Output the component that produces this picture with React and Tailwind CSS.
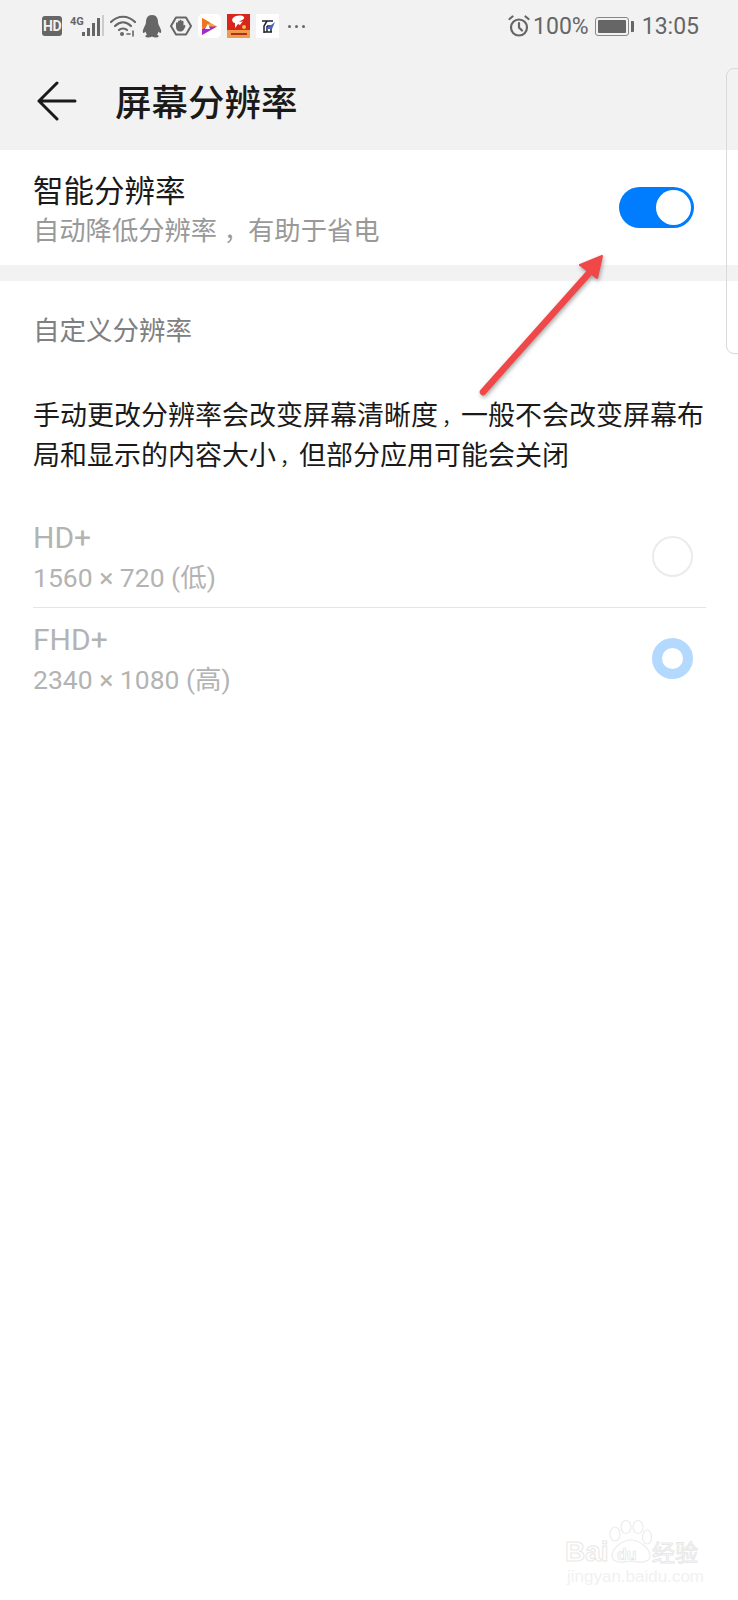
const cjk = "font-['Noto_Sans_CJK_SC','Noto_Sans',sans-serif]";

function StatusIcons() {
  return (
    <div className="flex items-center">
      {/* HD badge */}
      <div className="w-[20px] h-[20px] rounded-[3px] bg-[#666] text-[#f2f2f2] text-[14px] font-bold flex items-center justify-center font-['Roboto',sans-serif] tracking-[-0.5px]">HD</div>
      {/* 4G + signal */}
      <svg className="ml-[8px]" width="34" height="24" viewBox="0 0 34 24">
        <text x="0" y="11" fontSize="11" fontWeight="700" fill="#666" fontFamily="Roboto">4G</text>
        <rect x="12" y="18" width="3" height="4" fill="#666" />
        <rect x="17" y="14" width="3" height="8" fill="#666" />
        <rect x="22" y="9" width="3" height="13" fill="#666" />
        <rect x="27" y="4" width="3" height="18" fill="#666" />
        <rect x="32" y="1" width="2" height="21" fill="#ccc" />
      </svg>
      {/* wifi */}
      <svg className="ml-[6px]" width="26" height="22" viewBox="0 0 26 22" fill="none" stroke="#666" strokeWidth="2.200" strokeLinecap="round">
        <path d="M1 7C8 0 18 0 25 7" />
        <path d="M5 11C10 6 16 6 21 11" />
        <path d="M9 15C11 13 15 13 17 15" />
        <circle cx="12" cy="19" r="2" fill="#666" stroke="none" />
        <path d="M17 19h3M23 16v5" strokeWidth="1.600" />
      </svg>
      {/* qq */}
      <svg className="ml-[6px]" width="20" height="23" viewBox="0 0 20 23">
        <path d="M10 0C5.500 0 4 3.500 4 7C4 9.500 2 12 1 15C0.500 17 1 18.500 2 18C2.500 17.800 3 17 3.500 16.500C3.800 18 4.500 19 5 19.500C4 20 3 20.800 3.500 21.800C4.500 23 8 22.500 10 21.500C12 22.500 15.500 23 16.500 21.800C17 20.800 16 20 15 19.500C15.500 19 16.200 18 16.500 16.500C17 17 17.500 17.800 18 18C19 18.500 19.500 17 19 15C18 12 16 9.500 16 7C16 3.500 14.500 0 10 0Z" fill="#666" />
      </svg>
      {/* shield hand */}
      <svg className="ml-[8px]" width="22" height="20" viewBox="0 0 22 20">
        <path d="M6 1.500H16L21 10L16 18.500H6L1 10Z" fill="none" stroke="#666" strokeWidth="2" strokeLinejoin="round" />
        <path d="M6 7.500C6 6 8 6 8 7V5.500C8 4.200 9.700 4.200 9.700 5.500V4.800C9.700 3.500 11.500 3.500 11.500 4.800V5.500C11.500 4.500 13.500 4.500 13.500 5.800V9.500C14 8.500 15.800 8.800 15.300 10.200C14.500 12.500 13.500 15.500 10.300 15.500C7.500 15.500 6 13.500 6 11Z" fill="#666" />
      </svg>
      {/* video app */}
      <div className="ml-[6px] w-[23px] h-[24px] rounded-[5px] bg-white flex items-center justify-center">
        <svg width="17" height="19" viewBox="0 0 17 19">
          <path d="M1 1L16 9.500L1 18Z" fill="#f5a623" />
          <path d="M1 1L9 5.500L5 12L1 10Z" fill="#f0731e" />
          <path d="M1 18L16 9.500L8 9.500L1 12Z" fill="#a22ad0" />
          <path d="M4 12L7 6.500L9 12Z" fill="#fff" />
        </svg>
      </div>
      {/* red app */}
      <div className="ml-[6px] w-[23px] h-[24px] bg-[#d8261c] flex flex-col justify-end overflow-hidden relative">
        <svg className="absolute top-[1px] left-[3px]" width="17" height="15" viewBox="0 0 17 15">
          <path d="M3 3C6 0 12 0 14 2C15 4 11 6 9 6C10 7 12 7 13 6L10 10L8 9L5 13L5 8C3 8 1 5 3 3Z" fill="#fff" />
          <circle cx="14" cy="12" r="2" fill="#f4c430" />
        </svg>
        <div className="h-[8px] bg-[#f09a50] flex items-center justify-center">
          <div className="w-[16px] h-[2px] bg-[#a8321c]" />
        </div>
      </div>
      {/* third app */}
      <div className="ml-[6px] w-[23px] h-[24px] bg-white flex items-center justify-center">
        <svg width="16" height="15" viewBox="0 0 16 15" fill="none">
          <path d="M2 2H13M7 2L4 7V14M4 13H12M7 7H11V13M7 7V13" stroke="#223" strokeWidth="1.500" />
          <path d="M6 10L15 3L12 10Z" fill="#4a63c8" />
        </svg>
      </div>
      {/* more */}
      <div className="ml-[9px] flex gap-[4px]">
        <div className="w-[3px] h-[3px] rounded-full bg-[#666]" />
        <div className="w-[3px] h-[3px] rounded-full bg-[#666]" />
        <div className="w-[3px] h-[3px] rounded-full bg-[#666]" />
      </div>
    </div>
  );
}

function StatusRight() {
  return (
    <div className="flex items-center text-[#666] font-['Roboto',sans-serif] text-[23px] leading-none">
      <svg width="22" height="22" viewBox="0 0 22 22" fill="none" stroke="#666" strokeWidth="2.200" strokeLinecap="round">
        <circle cx="11" cy="12.500" r="8" />
        <path d="M11 8V12.500L14 15.500M1.500 4L4.500 1.500M20.500 4L17.500 1.500" />
      </svg>
      <span className="ml-[3px]">100%</span>
      <div className="ml-[6px] flex items-center">
        <div className="w-[34px] h-[19px] rounded-[3px] border border-[#888] p-[2px]">
          <div className="w-full h-full bg-[#666] rounded-[1px]" />
        </div>
        <div className="ml-[2px] w-[3px] h-[11px] bg-[#666] rounded-r-[1px]" />
      </div>
      <span className="ml-[8px]">13:05</span>
    </div>
  );
}

function RadioRow({ name, res, selected, height }) {
  return (
    <div className={`${height} flex items-center justify-between pr-[13px]`}>
      <div className="pt-[4px] text-[#b3b3b3] font-['Roboto','Noto_Sans_CJK_SC',sans-serif]">
        <div className="text-[30px] leading-[36px]">{name}</div>
        <div className="text-[26.500px] leading-[36px] mt-[4px]">{res}</div>
      </div>
      {selected ? (
        <div className="w-[41px] h-[41px] rounded-full border-[10px] border-[#b3d9ff] bg-white" />
      ) : (
        <div className="w-[41px] h-[41px] rounded-full border-[2px] border-[#ebebeb] bg-white" />
      )}
    </div>
  );
}

// one line of the paragraph, the comma has its own narrow cell
function TextLine({ before, after }) {
  return (
    <div className="flex items-baseline h-[40px] whitespace-nowrap">
      <span>{before}</span>
      <span className="w-[23px] pl-[4px] text-[19px]">，</span>
      <span>{after}</span>
    </div>
  );
}

export default function App() {
  return (
    <div className={`relative w-[738px] h-[1600px] bg-white overflow-hidden ${cjk}`}>
      {/* Status bar */}
      <div className="bg-[#f2f2f2] h-[52px] pl-[42px] pr-[39px] flex items-center justify-between">
        <StatusIcons />
        <StatusRight />
      </div>

      {/* Title bar */}
      <div className="bg-[#f2f2f2] h-[98px] flex items-center pl-[37px]">
        <svg width="40" height="40" viewBox="0 0 40 40" fill="none" stroke="#1a1a1a" strokeWidth="3" strokeLinecap="round" strokeLinejoin="round">
          <path d="M20 2L2 20L20 38M2 20H38" />
        </svg>
        <h1 className="ml-[38px] text-[36.500px] leading-none font-medium text-[#1a1a1a]">屏幕分辨率</h1>
      </div>

      {/* Smart resolution */}
      <div className="h-[115px] flex items-center justify-between pl-[33px] pr-[44px]">
        <div className="pt-[2px]">
          <div className="text-[30.500px] leading-[38px] text-[#1a1a1a]">智能分辨率</div>
          <div className="mt-[2px] h-[38px] flex items-baseline text-[26.300px] leading-[38px] text-[#999]">
            <span>自动降低分辨率</span>
            <span className="w-[31px] pl-[7px] text-[24px]">，</span>
            <span>有助于省电</span>
          </div>
        </div>
        <div className="w-[75px] h-[41px] rounded-full bg-[#007dff] flex items-center justify-end pr-[3px]">
          <div className="w-[35px] h-[35px] rounded-full bg-white" />
        </div>
      </div>
      <div className="h-[16px] bg-[#f2f2f2]" />

      {/* Custom resolution */}
      <div className="pl-[33px] pr-[20px]">
        <div className="mt-[28px] text-[26.500px] leading-[40px] text-[#808080]">自定义分辨率</div>
        <div className="mt-[45px] text-[27px] leading-[40px] text-[#1a1a1a]">
          <TextLine before="手动更改分辨率会改变屏幕清晰度" after="一般不会改变屏幕布" />
          <TextLine before="局和显示的内容大小" after="但部分应用可能会关闭" />
        </div>
        <div className="mt-[31px] mr-[12px]">
          <RadioRow name="HD+" res="1560 × 720 (低)" height="h-[102px]" />
          <div className="h-px bg-[#e5e5e5]" />
          <RadioRow name="FHD+" res="2340 × 1080 (高)" height="h-[100px]" selected />
        </div>
      </div>

      {/* Overlay panel edge */}
      <div className="absolute left-[726px] top-[68px] w-[30px] h-[286px] rounded-[8px] border border-[#d9d9d9] bg-transparent" />

      {/* Annotation arrow */}
      <svg className="absolute left-[470px] top-[250px] drop-shadow-[1px_2px_2px_rgba(0,0,0,0.35)]" width="140" height="160" viewBox="0 0 140 160" fill="none">
        <path d="M13 142L120 22" stroke="#f04848" strokeWidth="6.500" strokeLinecap="round" />
        <path d="M132 6L110 15L127 28Z" fill="#f04848" stroke="#f04848" strokeWidth="2" strokeLinejoin="round" />
      </svg>

      {/* Watermark */}
      <div className="absolute left-[565px] top-[1518px] w-[170px] h-[82px]">
        <svg className="absolute left-[44px] top-[2px]" width="44" height="44" viewBox="0 0 44 44" fill="white" stroke="#ececec" strokeWidth="1.200">
          <ellipse cx="6" cy="14" rx="5" ry="7" />
          <ellipse cx="17" cy="7" rx="5" ry="6.500" />
          <ellipse cx="29" cy="7" rx="5" ry="6.500" />
          <ellipse cx="38" cy="17" rx="4.500" ry="7" />
          <path d="M22 20C14 20 3 28 3 36C3 43 14 43 22 41C30 43 41 43 41 36C41 28 30 20 22 20Z" />
        </svg>
        <div className="absolute left-0 top-[20px] text-[28px] leading-none font-bold text-white font-['Liberation_Sans',sans-serif] [-webkit-text-stroke:1px_#e8e8e8]">Bai</div>
        <div className="absolute left-[52px] top-[29px] text-[16px] leading-none font-bold text-white font-['Liberation_Sans',sans-serif] [-webkit-text-stroke:0.700px_#e4e4e4]">du</div>
        <div className="absolute left-[87px] top-[22px] text-[23px] leading-none text-white [-webkit-text-stroke:1px_#e8e8e8]">经验</div>
        <div className="absolute left-[2px] top-[50px] text-[17px] leading-none text-[#f1f1f1] font-['Liberation_Sans',sans-serif]">jingyan.baidu.com</div>
      </div>
    </div>
  );
}
